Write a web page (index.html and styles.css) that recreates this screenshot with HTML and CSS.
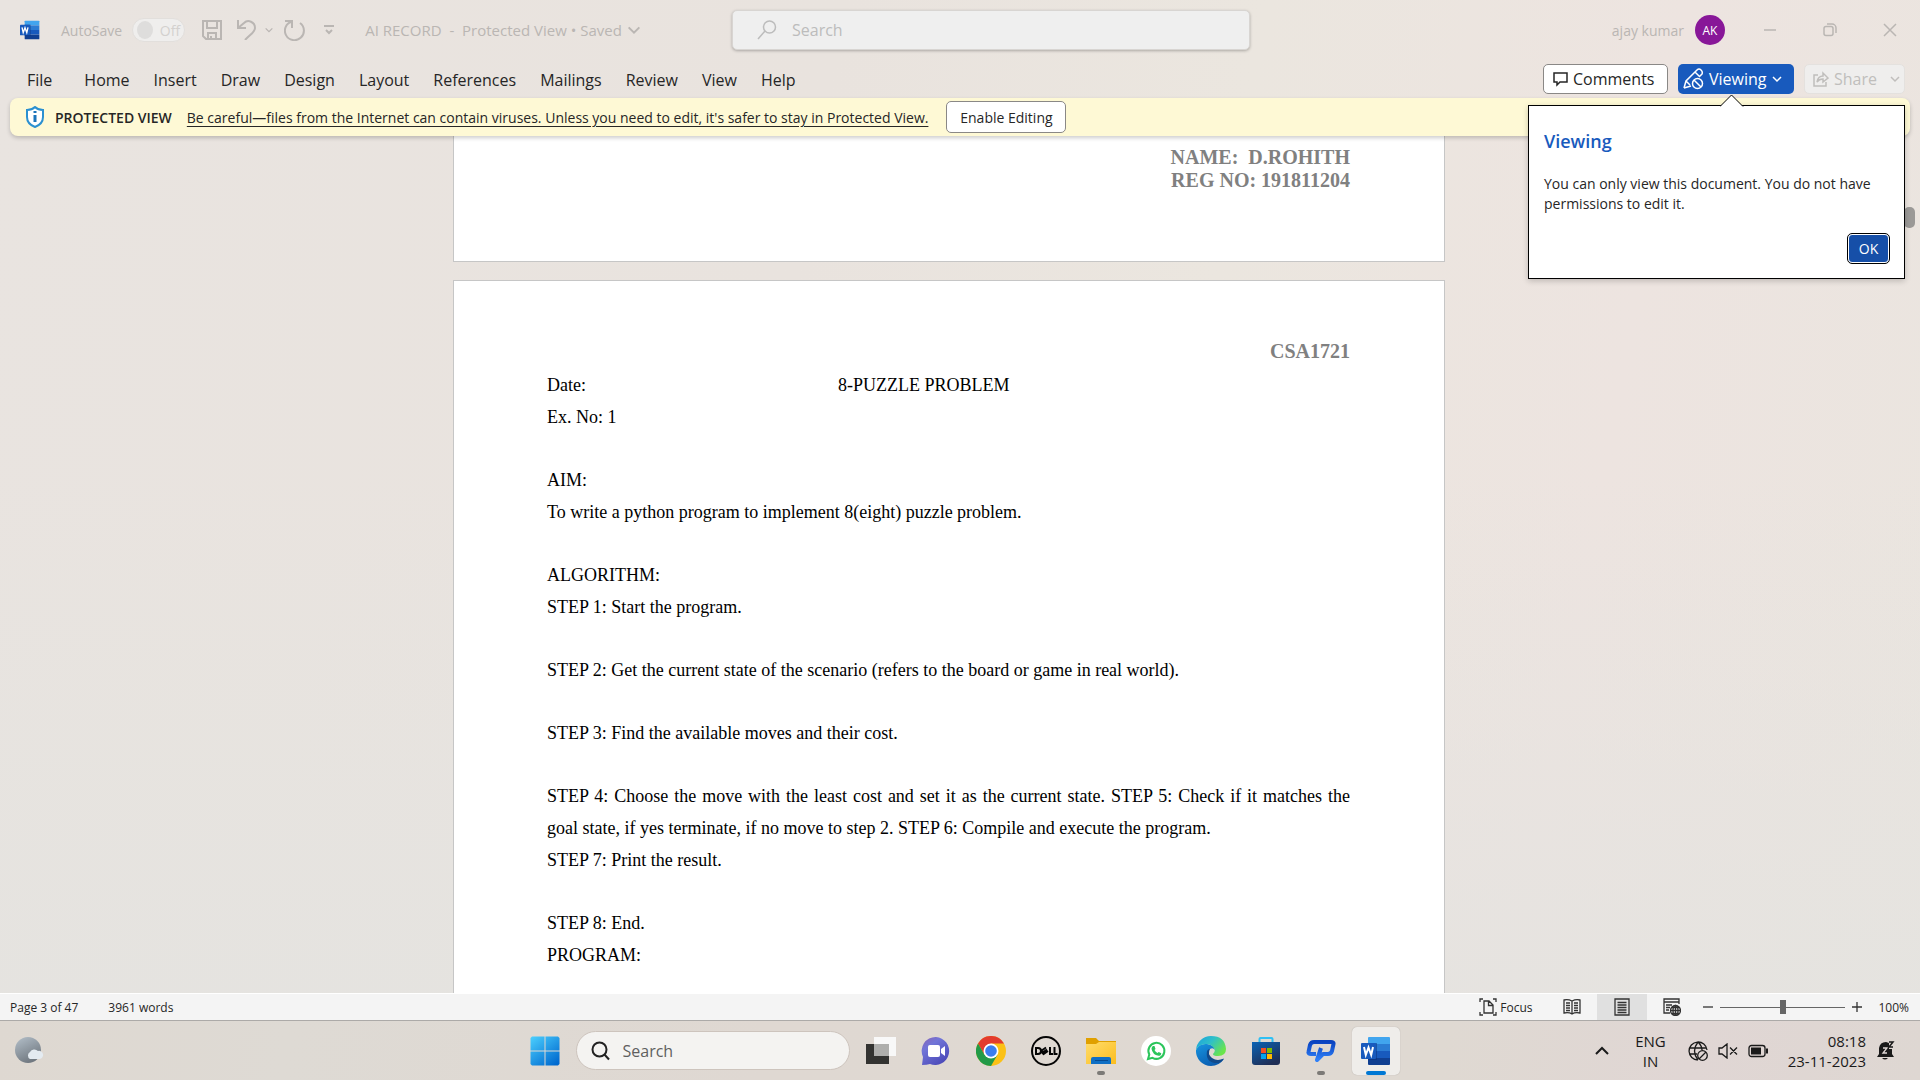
FILE: index.html
```html
<!DOCTYPE html>
<html lang="en">
<head>
<meta charset="utf-8">
<title>AI RECORD - Word</title>
<link rel="stylesheet" href="styles.css">
</head>
<body>
<svg class="defs" width="0" height="0" aria-hidden="true">
  <defs>
    <symbol id="word" viewBox="0 0 30 30">
      <path fill="#41a5ee" d="M8 1h20a1 1 0 0 1 1 1v6H7V2a1 1 0 0 1 1-1z"/>
      <path fill="#2b7cd3" d="M7 8h22v7H7z"/>
      <path fill="#185abd" d="M7 15h22v7H7z"/>
      <path fill="#103f91" d="M7 22h22v6a1 1 0 0 1-1 1H8a1 1 0 0 1-1-1z"/>
      <path fill="#0b2f75" opacity=".5" d="M7 7h9v17H7z"/>
      <rect x="0" y="7" width="15" height="16" rx="1" fill="#185abd"/>
      <path fill="none" stroke="#fff" stroke-width="2" d="M3 11l1.800 8L7.500 11.500 10.200 19 12 11"/>
    </symbol>
    <symbol id="chev" viewBox="0 0 12 12"><path fill="none" stroke="currentColor" stroke-width="1.500" d="M2 4l4 4 4-4"/></symbol>
  </defs>
</svg>
<div class="app">
  <header class="titlebar">
    <div class="title-left">
      <svg class="logo" width="20" height="22"><use href="#word"/></svg>
      <label class="autosave">AutoSave
        <input type="checkbox" class="toggle" disabled><span class="switch"><i></i>Off</span>
      </label>
      <button class="tool save" aria-label="Save"><svg width="20" height="20" viewBox="0 0 20 20"><path d="M1 1h18v18H4l-3-3zM5 1v7h10V1M6 19v-6h8v6M9 19v-3"/></svg></button>
      <button class="tool undo" aria-label="Undo"><svg width="20" height="20" viewBox="0 0 20 20"><path d="M1 0v8h8M1 8l6-5c4-4 11-1 11 5 0 4-3 5-10 12"/></svg><svg width="10" height="10"><use href="#chev"/></svg></button>
      <button class="tool redo" aria-label="Redo"><svg width="22" height="22" viewBox="0 0 22 22"><path d="M1 2h7v7M8 2.500A9.500 9.500 0 1 0 16 4"/></svg></button>
      <button class="tool more" aria-label="Customize toolbar"><svg width="10" height="10" viewBox="0 0 10 10"><path d="M0 1h10M2 5l3 3 3-3"/></svg></button>
      <button class="filename">AI RECORD&nbsp; -&nbsp; Protected View • Saved<svg width="16" height="16"><use href="#chev"/></svg></button>
    </div>
    <label class="search"><svg width="20" height="20" viewBox="0 0 20 20"><circle cx="12.500" cy="7" r="6"/><path d="M8 11l-7 8"/></svg><input type="text" placeholder="Search" aria-label="Search"></label>
    <div class="title-right">
      <span>ajay kumar</span><span class="avatar">AK</span>
      <button class="win" aria-label="Minimize"><svg width="14" height="14"><path d="M1 7h12"/></svg></button>
      <button class="win" aria-label="Restore"><svg width="14" height="14"><rect x="1" y="3.500" width="9" height="9" rx="2"/><path d="M4 1h5a4 4 0 0 1 4 4v5"/></svg></button>
      <button class="win" aria-label="Close"><svg width="14" height="14"><path d="M1 1l12 12M13 1L1 13"/></svg></button>
    </div>
  </header>
  <nav class="tabs">
    <a class="file" href="#">File</a><a href="#">Home</a><a href="#">Insert</a><a href="#">Draw</a><a href="#">Design</a><a href="#">Layout</a><a href="#">References</a><a href="#">Mailings</a><a href="#">Review</a><a href="#">View</a><a href="#">Help</a>
    <div class="actions">
      <button class="btn comments"><svg width="16" height="16" viewBox="0 0 16 16"><path d="M1 2h13v9H7l-3 3v-3H1z"/></svg>Comments</button>
      <div class="anchor">
        <button class="btn viewing"><svg width="22" height="22" viewBox="0 0 22 22"><path d="M1 20l2-7L14 2q2-2 4 0t1 4l-3 3M12 4l4 4M3 13l4 4M1 20l7-2"/><circle cx="14.500" cy="15.500" r="5"/><path d="M11 12l7 7"/></svg>Viewing<svg class="c" width="12" height="12"><use href="#chev"/></svg></button>
        <section class="callout" role="dialog" aria-labelledby="co">
          <svg class="tip" width="24" height="13" viewBox="0 0 24 13"><path fill="#fff" stroke="#000" d="M0 12.500L11.500 1 23 12.500"/></svg>
          <h2 id="co">Viewing</h2>
          <p>You can only view this document. You do not have permissions to edit it.</p>
          <button class="ok">OK</button>
        </section>
      </div>
      <button class="btn share" disabled><svg width="16" height="16" viewBox="0 0 16 16"><path d="M5 4H1v11h12v-4M4 11q1-6 6-6V2l5 5-5 4V8Q6 8 4 11z"/></svg>Share<svg class="c" width="12" height="12"><use href="#chev"/></svg></button>
    </div>
  </nav>
  <div class="notice">
    <svg width="20" height="22" viewBox="0 0 20 22"><path fill="#fff" stroke="#2b90d0" stroke-width="2" d="M10 1q3 3 8 3v7q0 7-8 10-8-3-8-10V4q5 0 8-3z"/><path stroke="#1b75bb" stroke-width="3" d="M10 9v7M10 5v2"/></svg>
    <strong>PROTECTED VIEW</strong>
    <a href="#">Be careful—files from the Internet can contain viruses. Unless you need to edit, it's safer to stay in Protected View.</a>
    <button>Enable Editing</button>
  </div>
  <main class="canvas">
    <article class="page first"><p class="head">NAME:&nbsp; D.ROHITH<br>REG NO: 191811204</p></article>
    <article class="page second">
      <p class="head">CSA1721</p>
      <p class="row"><span>Date:</span><span>8-PUZZLE PROBLEM</span></p>
      <p>Ex. No: 1</p>
      <p class="gap">AIM:</p>
      <p>To write a python program to implement 8(eight) puzzle problem.</p>
      <p class="gap">ALGORITHM:</p>
      <p>STEP 1: Start the program.</p>
      <p class="gap">STEP 2: Get the current state of the scenario (refers to the board or game in real world).</p>
      <p class="gap">STEP 3: Find the available moves and their cost.</p>
      <p class="gap justify">STEP 4: Choose the move with the least cost and set it as the current state. STEP 5: Check if it matches the goal state, if yes terminate, if no move to step 2. STEP 6: Compile and execute the program.</p>
      <p>STEP 7: Print the result.</p>
      <p class="gap">STEP 8: End.</p>
      <p>PROGRAM:</p>
    </article>
    <i class="thumb"></i>
  </main>
  <footer class="status">
    <span>Page 3 of 47</span><span>3961 words</span>
    <div class="views">
      <button class="focus"><svg width="18" height="18" viewBox="0 0 18 18"><path d="M4 1H1v3M14 1h3v3M4 17H1v-3M14 17h3v-3M5 3h5l4 4v8H5zM9.500 3v4.500H14"/></svg>Focus</button>
      <button aria-label="Read mode"><svg width="18" height="18" viewBox="0 0 18 18"><path d="M9 3Q5 1 1 2v13q5-1 8 1 3-2 8-1V2q-4-1-8 1zM9 3v13M3 5h4M3 7.500h4M3 10h4M3 12.500h4M11 5h4M11 7.500h4M11 10h4M11 12.500h4"/></svg></button>
      <button class="on" aria-label="Print layout"><svg width="18" height="18" viewBox="0 0 18 18"><path d="M2 1h14v16H2zM4.500 4.500h9M4.500 7h9M4.500 9.500h9M4.500 12h9M4.500 14.500h9"/></svg></button>
      <button aria-label="Web layout"><svg width="18" height="18" viewBox="0 0 18 18"><path d="M7 15H1V1h15v5M1 4h15M3 7h6M3 9.500h4M3 12h3"/><circle cx="12.500" cy="12.500" r="5"/><path d="M7.500 12.500h10M12.500 7.500v10M9 9.500h7M9 15.500h7"/><ellipse cx="12.500" cy="12.500" rx="2.500" ry="5"/></svg></button>
    </div>
    <button class="zoom-step" aria-label="Zoom out"><svg width="10" height="10"><path d="M0 5h10"/></svg></button>
    <input class="zoom" type="range" min="0" max="100" value="50" aria-label="Zoom">
    <button class="zoom-step" aria-label="Zoom in"><svg width="10" height="10"><path d="M0 5h10M5 0v10"/></svg></button>
    <span class="pct">100%</span>
  </footer>
  <div class="taskbar">
    <div class="side"><button class="weather" aria-label="Weather"><svg width="30" height="28" viewBox="0 0 30 28"><defs><linearGradient id="moon" x2="0.500" y2="1"><stop stop-color="#b4c0ca"/><stop offset="1" stop-color="#717981"/></linearGradient></defs><circle cx="13" cy="13" r="13" fill="url(#moon)"/><path fill="#e4ebf1" d="M15 22a4 4 0 0 1 0-7 5 5 0 0 1 8-1 4 4 0 1 1 2 8z"/></svg></button></div>
    <div class="dock">
      <button class="app-icon" aria-label="Start"><svg width="30" height="30" viewBox="0 0 30 30"><defs><linearGradient id="win" gradientUnits="userSpaceOnUse" x1="0" y1="0" x2="24" y2="30"><stop stop-color="#4dd2ff"/><stop offset="1" stop-color="#0069cf"/></linearGradient></defs><path fill="url(#win)" d="M2 .5h12.500V14.500H.5V2zM15.500.5H28L29.500 2v12.500h-14zM.5 15.500h14v14H2L.5 28zM15.500 15.500h14V28L28 29.500H15.500z"/></svg></button>
      <label class="tsearch"><svg width="20" height="20" viewBox="0 0 20 20"><circle cx="8.500" cy="8.500" r="7"/><path d="M13.500 13.500L18 18.500"/></svg><input type="text" placeholder="Search" aria-label="Search the taskbar"></label>
      <button class="app-icon" aria-label="Task view"><svg width="30" height="30" viewBox="0 0 30 30"><path fill="#333331" d="M0 8h23v20H0z"/><path fill="#f8f8f8" d="M8 1h22v19H8z"/><path fill="#aeaeac" d="M8 8h15v12H8z"/></svg></button>
      <button class="app-icon" aria-label="Chat"><svg width="30" height="30" viewBox="0 0 30 30"><defs><linearGradient id="chat" x2="0.700" y2="1"><stop stop-color="#8a63b4"/><stop offset=".35" stop-color="#7175d8"/><stop offset="1" stop-color="#4b49b8"/></linearGradient></defs><path fill="url(#chat)" d="M15 1a14 14 0 1 1-6 27q-3 1-8 1l1-8A14 14 0 0 1 15 1z"/><rect x="7" y="9" width="12" height="12" rx="2" fill="#fff"/><path fill="#fff" d="M20 13l4-3v10l-4-3z"/></svg></button>
      <button class="app-icon" aria-label="Chrome"><svg width="30" height="30" viewBox="0 0 30 30"><circle cx="15" cy="15" r="15" fill="#fbc116"/><path fill="#e33b2e" d="M2 7.500A15 15 0 0 1 28 7.500H15L8.500 18.800z"/><path fill="#229a48" d="M2 7.500A15 15 0 0 0 15 30l6.500-11.200L15 15l-6.500 3.800z"/><circle cx="15" cy="15" r="7.500" fill="#fff"/><circle cx="15" cy="15" r="5.800" fill="#3b7ded"/></svg></button>
      <button class="app-icon" aria-label="Dell"><svg width="30" height="30" viewBox="0 0 30 30"><circle cx="15" cy="15" r="14" fill="none" stroke="#050505" stroke-width="2"/><path fill="none" stroke="#050505" stroke-width="2" d="M5 12v6h2q3 0 3-3t-3-3zM10 15l5-3.500M11 17l5-3.500M12 18.500l5-3.500M10 15l3 3.500M19 11v7h3M23.500 11v7h3"/></svg></button>
      <button class="app-icon running" aria-label="File Explorer"><svg width="30" height="30" viewBox="0 0 30 30"><defs><linearGradient id="fold" x2="1" y2="1"><stop stop-color="#ffdc6c"/><stop offset="1" stop-color="#fbbd1e"/></linearGradient></defs><path fill="#e0a000" d="M0 2h10l3 3h17v5H0z"/><path fill="url(#fold)" d="M0 8h10l3-2h17v22H0z"/><path fill="#0f6fc4" d="M5 28v-5a2 2 0 0 1 2-2h16a2 2 0 0 1 2 2v5z"/><path stroke="#064a91" d="M9 24.500h13"/></svg></button>
      <button class="app-icon" aria-label="WhatsApp"><svg width="30" height="30" viewBox="0 0 30 30"><circle cx="15" cy="15" r="15" fill="#fff"/><path fill="none" stroke="#2bc55b" stroke-width="2" d="M7 23l1.300-4.500A8 8 0 1 1 11.500 21.800z"/><path fill="#2bc55b" d="M12 10l1.500 0 1 3-1 1q1 2 3 3l1.200-1 2.600 1.200q0 2.500-2.800 2.600-6-1-7-7 .2-2 1.500-2.800z"/></svg></button>
      <button class="app-icon" aria-label="Edge"><svg width="30" height="30" viewBox="0 0 30 30"><defs><linearGradient id="ed1" x2="1" y2=".6"><stop stop-color="#1a9fe0"/><stop offset=".5" stop-color="#2fc0c8"/><stop offset="1" stop-color="#6ae54b"/></linearGradient><linearGradient id="ed2" x2=".6" y2="1"><stop stop-color="#1795e0"/><stop offset="1" stop-color="#0a5cb0"/></linearGradient></defs><path fill="url(#ed2)" d="M0 14Q3 7 11 8q7 1 8 6-2-3-5-1-4 4 1 9 5 4 13 1-5 7-13 7A15 15 0 0 1 0 14z"/><path fill="#114a8b" d="M11 15q-2 13 12 12 3-1 5-4.500-7 3-12-.5-5-4-2-9-2 0-3 2z"/><path fill="url(#ed1)" d="M0 14A15 15 0 0 1 15 0q14 0 15 13 0 7-8 7-5 0-5-2 3-3 1-6-3-4-8-4-7 0-10 6z"/></svg></button>
      <button class="app-icon" aria-label="Microsoft Store"><svg width="30" height="30" viewBox="0 0 30 30"><defs><linearGradient id="st" x2=".6" y2="1"><stop stop-color="#0b63b5"/><stop offset="1" stop-color="#1f2e55"/></linearGradient></defs><path fill="none" stroke="#2fc0f4" stroke-width="2" d="M8.500 7V3q0-1 1-1h11q1 0 1 1v4"/><path fill="url(#st)" d="M1 6h28v20a3 3 0 0 1-3 3H4a3 3 0 0 1-3-3z"/><path fill="#f25022" d="M10 12h5v5h-5z"/><path fill="#7fba00" d="M16 12h5v5h-5z"/><path fill="#00a4ef" d="M10 18h5v5h-5z"/><path fill="#ffb900" d="M16 18h5v5h-5z"/></svg></button>
      <button class="app-icon running" aria-label="Assistant"><svg width="30" height="30" viewBox="0 0 30 30"><defs><linearGradient id="as" x2="0" y2="1"><stop stop-color="#0a43c0"/><stop offset="1" stop-color="#2f80f8"/></linearGradient></defs><path fill="none" stroke="url(#as)" stroke-width="4" stroke-linejoin="round" d="M10 18H5q-3 0-2.500-2L4 9q1-3 4-3H25q3 0 2.500 2L26 15q-1 3-4 3h-5l-6 6 4-12"/></svg></button>
      <button class="app-icon active" aria-label="Word"><svg width="30" height="30"><use href="#word"/></svg></button>
    </div>
    <div class="side tray">
      <button aria-label="Hidden icons"><svg width="14" height="14"><path stroke-width="2" d="M1 10l6-6 6 6"/></svg></button>
      <span class="lang">ENG<br>IN</span>
      <svg width="20" height="20" viewBox="0 0 20 20"><path d="M10 19A9 9 0 1 1 19 9M1.500 7h17M1.500 13H9M10 1Q3 10 10 19M10 1q4 4 4 8"/><circle cx="14.500" cy="14.500" r="4.800"/><path d="M11 18l7-7"/></svg>
      <svg class="vol" width="20" height="16" viewBox="0 0 20 16"><path d="M1 5h3l5-4v14l-5-4H1zM12 4.500l7 7M19 4.500l-7 7"/></svg>
      <svg class="bat" width="20" height="14" viewBox="0 0 20 14"><rect x="1" y="1.500" width="16" height="11" rx="2.500"/><path fill="#1a1a1a" stroke="none" d="M3 3.500h10v7H3zM18 4.500h2v5h-2z"/></svg>
      <span class="clock">08:18<br>23-11-2023</span>
      <svg class="bell" width="18" height="20" viewBox="0 0 18 20"><path fill="#1a1a1a" stroke="none" d="M0 16l2-3V7q1-6 7-6l3 1v6h3v5l2 3zM5 17h6q-3 3-6 0z"/><path stroke="#e0d8d6" stroke-width="1.300" d="M6 7h4l-4 5h4"/><path stroke-width="1.500" d="M12 1h4l-4 5h4"/></svg>
    </div>
  </div>
</div>
</body>
</html>
```
FILE: styles.css
```css
* { box-sizing: border-box; }
body { margin: 0; font-family: "Open Sans", "Noto Sans", sans-serif; font-size: 14px; color: #262626; }
button, input { font: inherit; color: inherit; border: 0; padding: 0; background: none; }
button { display: flex; align-items: center; white-space: nowrap; }
a { color: inherit; text-decoration: none; }
p, h2 { margin: 0; }
svg { flex: none; fill: none; stroke-width: 1; }
.defs { position: absolute; }
.app { height: 100vh; display: flex; flex-direction: column; overflow: hidden; background: linear-gradient(100deg, #e9e4e0 0%, #e9e3de 40%, #ebe6df 60%, #ede4e0 80%, #eae5df 100%); }

.titlebar { height: 60px; flex: none; display: grid; grid-template-columns: 732fr 518px 670fr; align-items: center; color: #bab6b3; }
.title-left { display: flex; align-items: center; padding-left: 20px; }
.autosave { display: flex; align-items: center; margin-left: 21px; gap: 10px; }
.toggle { position: absolute; opacity: 0; }
.switch { display: flex; align-items: center; gap: 7px; width: 53px; height: 24px; padding: 0 4px; border: 1px solid #e2dfdc; border-radius: 12px; background: #efeeed; color: #d3d1cf; }
.switch i { width: 18px; height: 18px; border-radius: 50%; background: #dedddc; }
.tool svg { stroke: currentColor; stroke-width: 2; }
.save { margin-left: 17px; }
.undo { margin-left: 15px; gap: 7px; }
.redo { margin-left: 10px; }
.more { margin-left: 18px; }
.filename { margin-left: 31px; gap: 4px; font-size: 15px; }
.search { height: 40px; display: flex; align-items: center; gap: 15px; padding: 0 24px; background: #efefef; border: 1px solid #d8d5d2; border-radius: 5px; box-shadow: 0 1px 3px #0004; font-size: 16px; }
.search svg { stroke: #bcbcbc; stroke-width: 1.5; }
.search input { flex: 1; min-width: 0; outline: 0; }
::placeholder { color: #bcbcbc; opacity: 1; }
.title-right { display: flex; align-items: center; justify-content: flex-end; padding-right: 23px; }
.avatar { width: 30px; height: 30px; margin: 0 38px 0 11px; border-radius: 50%; background: #881798; color: #fff; font-size: 12px; display: grid; place-items: center; }
.win svg { stroke: #bab6b3; stroke-width: 1.5; }
.win + .win { margin-left: 46px; }

.tabs { height: 38px; flex: none; display: flex; align-items: center; gap: 24px; padding: 0 15px 0 27px; font-size: 16px; }
.tabs > a { padding-top: 2px; }
.tabs .file { margin-right: 8px; }
.actions { margin-left: auto; display: flex; gap: 10px; align-items: center; }
.btn { height: 30px; border-radius: 5px; padding: 0 10px; gap: 5px; border: 1px solid transparent; }
.btn svg { stroke: currentColor; stroke-width: 1.5; }
.comments { width: 125px; gap: 4px; padding: 0 9px; background: #fff; border-color: #8a8886; }
.viewing { width: 116px; padding: 0 4px; gap: 4px; background: #185abd; color: #fff; }
.share { width: 101px; padding: 0 3px 0 8px; background: #efeeed; border-color: #e4e1de; color: #c0bebc; }
.share .c { margin-left: auto; }
.anchor { position: relative; }
.callout { position: absolute; z-index: 5; top: 41px; left: -150px; width: 377px; height: 174px; padding: 23px 15px 15px; display: flex; flex-direction: column; background: #fff; border: 1px solid #000; box-shadow: 0 2px 6px #0003; font-size: 14px; line-height: 20px; }
.tip { position: absolute; top: -12px; left: 191px; }
.callout h2 { font-size: 18px; line-height: 24px; font-weight: 600; color: #185abd; margin-bottom: 21px; }
.ok { margin-top: auto; align-self: flex-end; width: 41px; height: 29px; justify-content: center; background: #164fa8; color: #fff; border: 1px solid #fff; border-radius: 4px; outline: 1px solid #000; }

.notice { height: 38px; flex: none; display: flex; align-items: center; margin: 0 10px; padding-left: 15px; background: #fef9d5; border-radius: 8px; box-shadow: 0 2px 4px #0003; position: relative; z-index: 1; font-size: 14px; }
.notice strong { font-weight: 600; margin: 0 15px 0 10px; }
.notice a { text-decoration: underline; text-underline-offset: 3px; }
.notice button { height: 32px; width: 120px; justify-content: center; margin-left: 18px; background: #fff; border: 1px solid #8a8886; border-radius: 5px; }

.canvas { flex: 1; min-height: 0; overflow: hidden; position: relative; padding-right: 22px; background: linear-gradient(#e4e3e000 40%, #e4e3e0cc); font: 18px/32px "Liberation Serif", serif; color: #000; }
.page { width: 992px; margin: 0 auto; padding: 0 94px 0 93px; background: #fff; border: 1px solid #c6c6c6; }
.first { height: 126px; border-top: 0; padding-top: 10px; margin-bottom: 18px; }
.second { min-height: 1200px; padding-top: 59px; }
.head { font-size: 20px; line-height: 23px; font-weight: 700; color: #808080; text-align: right; }
.second .head { margin-bottom: 6px; }
.row { display: grid; grid-template-columns: 291px 1fr; }
.gap { margin-top: 31px; }
.justify { text-align: justify; }
.thumb { position: absolute; right: 5px; top: 71px; width: 11px; height: 21px; border-radius: 5px; background: #9b9997; }

.status { height: 28px; flex: none; display: flex; align-items: center; padding: 0 11px 0 10px; background: #f4f4f4; border-top: 1px solid #fff; border-bottom: 1px solid #acaaa8; font-size: 12px; }
.status > span + span { margin-left: 30px; }
.status svg { stroke: #333; stroke-width: 1.3; }
.views { margin-left: auto; display: flex; align-self: stretch; }
.views button { width: 50px; justify-content: center; }
.views .focus { width: auto; gap: 3px; margin-right: 15px; }
.views .on { background: #e0e0e0; }
.views + .zoom-step { margin-left: 6px; }
.zoom { appearance: none; width: 125px; height: 14px; margin: 0 7px; background: linear-gradient(#666, #666) center / 100% 1px no-repeat; }
.zoom::-webkit-slider-thumb { appearance: none; width: 6px; height: 14px; background: #666; }
.status .pct { margin-left: 16px; }

.taskbar { height: 59px; flex: none; display: grid; grid-template-columns: 1fr auto 1fr; align-items: center; background: linear-gradient(100deg, #ded8d1, #dedad4 15%, #dfd8d2 40%, #dfd9d2 75%, #e0d6d4 88%, #ded7d2); }
.side { display: flex; align-items: center; }
.weather { margin-left: 15px; }
.dock { display: flex; align-items: center; gap: 7px; }
.app-icon { width: 48px; height: 48px; justify-content: center; position: relative; border-radius: 5px; }
.running::after, .active::after { content: ""; position: absolute; bottom: 0; left: 20px; width: 8px; height: 4px; border-radius: 2px; background: #7c7a77; }
.active { background: #efedea; box-shadow: 0 0 1px #0004; }
.active::after { left: 14px; width: 20px; background: #0078d4; }
.tsearch { width: 274px; height: 39px; display: flex; align-items: center; gap: 12px; padding: 0 14px; border-radius: 20px; border: 1px solid #cdc4bd; background: #f4f3f1; font-size: 16px; }
.tsearch svg { stroke: #222; stroke-width: 2; }
.tsearch input { width: 100%; min-width: 0; outline: 0; }
.tsearch ::placeholder { color: #5f5f5f; }
.tray { justify-content: flex-end; padding-right: 25px; color: #1a1a1a; font-size: 15px; line-height: 20px; }
.tray svg { stroke: #1a1a1a; stroke-width: 1.3; }
.lang { text-align: center; margin: 0 22px 0 26px; }
.vol, .bat { margin-left: 10px; }
.clock { text-align: right; margin: 0 11px 0 20px; }
```
